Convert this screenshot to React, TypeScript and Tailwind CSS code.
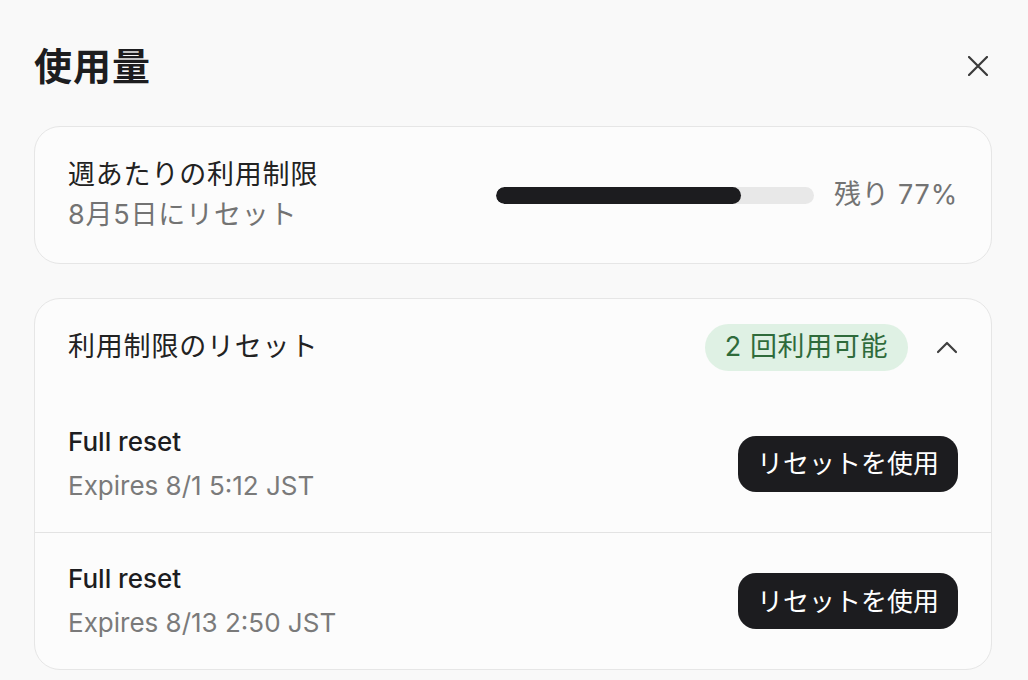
const resets = [
  { name: "Full reset", expires: "Expires 8/1 5:12 JST" },
  { name: "Full reset", expires: "Expires 8/13 2:50 JST" },
];

function CloseIcon() {
  return (
    <svg width="20" height="20" viewBox="0 0 20 20" fill="none">
      <path
        d="M1 1L19 19M19 1L1 19"
        stroke="#3a3a3a"
        strokeWidth="2.2"
        strokeLinecap="round"
      />
    </svg>
  );
}

function ChevronUp() {
  return (
    <svg width="22" height="14" viewBox="0 0 22 14" fill="none">
      <path
        d="M2 12L11 3L20 12"
        stroke="#3f3f3f"
        strokeWidth="2.2"
        strokeLinecap="round"
        strokeLinejoin="round"
      />
    </svg>
  );
}

export default function App() {
  const remaining = 77;

  return (
    <div
      className="w-[1028px] h-[680px] overflow-hidden bg-[#f9f9f9] text-[#1d1d1f]"
      style={{ fontFamily: 'Inter, "Noto Sans CJK JP", sans-serif' }}
    >
      <div className="pl-[34px] pr-[36px] pt-[40px]">
        {/* header */}
        <div className="flex items-center justify-between h-[52px]">
          <h1 className="text-[38px] font-bold leading-none tracking-[1px]">使用量</h1>
          <button className="mr-[4px] p-0">
            <CloseIcon />
          </button>
        </div>

        {/* weekly limit */}
        <div className="mt-[34px] flex items-center justify-between rounded-[26px] border border-[#e6e6e6] bg-[#fcfcfc] px-[33px] h-[138px]">
          <div className="text-[27px] leading-[40px] tracking-[0.8px]">
            <div className="text-[#222]">週あたりの利用制限</div>
            <div className="text-[#737373]">8月5日にリセット</div>
          </div>
          <div className="flex items-center gap-[20px]">
            <div className="w-[318px] h-[17px] rounded-full bg-[#e8e8e8] overflow-hidden">
              <div
                className="h-full rounded-full bg-[#1c1c1f]"
                style={{ width: `${remaining}%` }}
              />
            </div>
            <span className="text-[27px] text-[#737373] tracking-[0.8px]">
              残り {remaining}%
            </span>
          </div>
        </div>

        {/* resets */}
        <div className="mt-[34px] rounded-[26px] border border-[#e6e6e6] bg-[#fcfcfc] overflow-hidden">
          <div className="flex items-center justify-between px-[33px] h-[96px]">
            <span className="text-[27px] text-[#222] tracking-[0.8px]">
              利用制限のリセット
            </span>
            <div className="flex items-center gap-[28px]">
              <span className="flex items-center h-[47px] px-[20px] rounded-full bg-[#dff1e4] text-[27px] text-[#2f6b3b] tracking-[0.6px]">
                2 回利用可能
              </span>
              <ChevronUp />
            </div>
          </div>

          {resets.map((r, i) => (
            <div
              key={i}
              className={
                "flex items-center justify-between px-[33px] h-[137px] " +
                (i > 0 ? "border-t border-[#e3e3e3]" : "")
              }
            >
              <div className="leading-[44px]">
                <div className="text-[26px] font-medium text-[#1d1d1f]">
                  {r.name}
                </div>
                <div className="text-[26px] text-[#7a7a7a]">{r.expires}</div>
              </div>
              <button className="h-[56px] px-[19px] rounded-[18px] bg-[#1c1c1f] text-white text-[26px]">
                リセットを使用
              </button>
            </div>
          ))}
        </div>
      </div>
    </div>
  );
}
